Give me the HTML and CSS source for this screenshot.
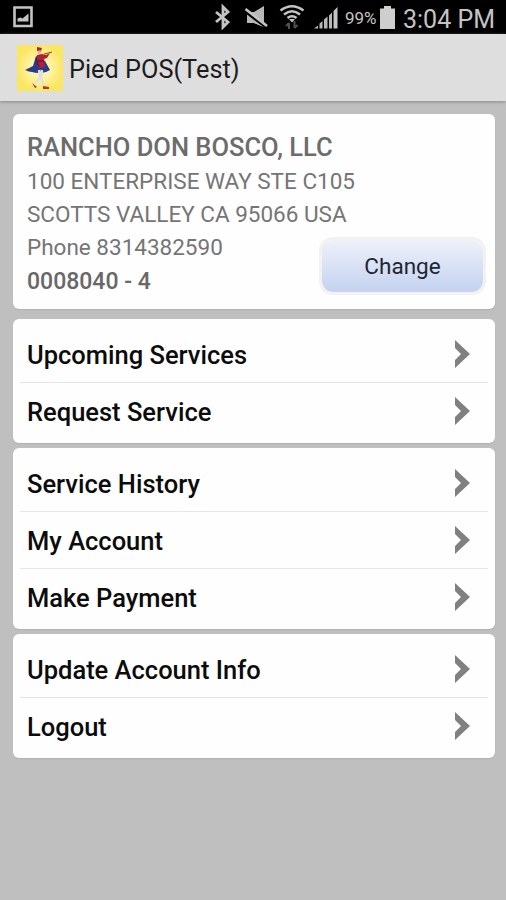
FILE: index.html
```html
<!DOCTYPE html>
<html lang="en">
<head>
  <meta charset="UTF-8">
  <meta name="viewport" content="width=device-width, initial-scale=1.0">
  <title>Pied POS(Test)</title>
  <link rel="stylesheet" href="styles.css">
</head>
<body>
  <div class="statusbar">
    <svg class="picture" width="20" height="22" viewBox="0 0 20 22">
      <path d="M1.5 1.5h17v18.5h-17z" fill="none" stroke="#c4c4c4" stroke-width="2.6"/>
      <path d="M4.5 15.5v-3l3-1 2 1 6-5v8z" fill="#c4c4c4"/>
    </svg>
    <svg class="icons" width="132" height="28" viewBox="0 0 132 28">
      <path d="M2 9l12 10-5 5V4l5 5L2 19" fill="none" stroke="#c4c4c4" stroke-width="2.8"/>
      <path d="M33 9h7l10-6v21l-10-4h-7z" fill="#b8b8b8"/>
      <path d="M31 8l22 17" stroke="#000" stroke-width="3"/>
      <path d="M31.5 6l21.5 17" stroke="#c4c4c4" stroke-width="2.6"/>
      <path d="M33 14v6h7l10 4z" fill="#b8b8b8"/>
      <g fill="none" stroke="#c4c4c4" stroke-width="2.6">
        <path d="M66.5 7.500q11.500-8.500 23 0"/>
        <path d="M70 11.500q8-6.500 16 0"/>
        <path d="M73.5 15q4.500-3.500 9 0"/>
      </g>
      <path d="M75 16h6l-3 3.500z" fill="#c4c4c4"/>
      <path d="M75 26v-6m-3 3l3-3M80.500 18v7m3-3l-3 3" fill="none" stroke="#505050" stroke-width="2"/>
      <path d="M100 25.500h4v-3zM105.500 25.500v-5l3-2.500v7.500zM110 25.500v-9l3.500-3v12zM115 25.500v-13l3-3v16z" fill="#b8b8b8"/>
      <path d="M119.500 25.500V8l4-4v21.500z" fill="#c4c4c4"/>
    </svg>
    <span class="percent">99%</span>
    <svg class="battery" width="16" height="23" viewBox="0 0 16 23">
      <path d="M0 2.500h4V0h7v2.500h4V23H0z" fill="#cecece"/>
    </svg>
    <span class="clock">3:04 PM</span>
  </div>

  <div class="titlebar">
    <svg class="logo" width="46" height="46" viewBox="0 0 46 46">
      <defs>
        <radialGradient id="glow">
          <stop offset="0" stop-color="#fff7d0"/>
          <stop offset="0.5" stop-color="#fff2a0"/>
          <stop offset="1" stop-color="#fbe662"/>
        </radialGradient>
      </defs>
      <rect width="46" height="46" fill="url(#glow)"/>
      <path d="M19 11l-3 10-8 4q4 2 7 2 6 2 14 0l4-2-5-9z" fill="#273b8c"/>
      <path d="M20 10l5-1 4 1 4-2-3 5-3 1 1 8-7 1-1-6z" fill="#b51f35"/>
      <path d="M20 2l5 1-1 3h-4z" fill="#a62a38"/>
      <circle cx="22.5" cy="7" r="1.8" fill="#e4b08c"/>
      <path d="M27 9l8-2" stroke="#705040"/>
      <path d="M22 25l1 8-6 6M25 25l-1 8 3 8" fill="none" stroke="#dfe2dc" stroke-width="2.5"/>
      <path d="M15 38l5 4-2 1zM26 41l6 1v2h-6z" fill="#ad3a2b"/>
      <path d="M19 13l3 9M21 16h6" stroke="#3a1735"/>
    </svg>
    <span class="title">Pied POS(Test)</span>
  </div>

  <div class="content">
    <div class="card account">
      <div class="address">
        <div class="name">RANCHO DON BOSCO, LLC</div>
        <div>100 ENTERPRISE WAY STE C105</div>
        <div>SCOTTS VALLEY CA 95066 USA</div>
        <div>Phone 8314382590</div>
        <div class="number">0008040 - 4</div>
      </div>
      <button class="change">Change</button>
    </div>

    <div class="card menu">
      <div class="row"><span>Upcoming Services</span><svg class="arrow" viewBox="0 0 15 28"><path d="M0 0l15 14L0 28v-8l6-6-6-6z"/></svg></div>
      <div class="row"><span>Request Service</span><svg class="arrow" viewBox="0 0 15 28"><path d="M0 0l15 14L0 28v-8l6-6-6-6z"/></svg></div>
    </div>

    <div class="card menu">
      <div class="row"><span>Service History</span><svg class="arrow" viewBox="0 0 15 28"><path d="M0 0l15 14L0 28v-8l6-6-6-6z"/></svg></div>
      <div class="row"><span>My Account</span><svg class="arrow" viewBox="0 0 15 28"><path d="M0 0l15 14L0 28v-8l6-6-6-6z"/></svg></div>
      <div class="row"><span>Make Payment</span><svg class="arrow" viewBox="0 0 15 28"><path d="M0 0l15 14L0 28v-8l6-6-6-6z"/></svg></div>
    </div>

    <div class="card menu">
      <div class="row"><span>Update Account Info</span><svg class="arrow" viewBox="0 0 15 28"><path d="M0 0l15 14L0 28v-8l6-6-6-6z"/></svg></div>
      <div class="row"><span>Logout</span><svg class="arrow" viewBox="0 0 15 28"><path d="M0 0l15 14L0 28v-8l6-6-6-6z"/></svg></div>
    </div>
  </div>
</body>
</html>
```
FILE: styles.css
```css
* { box-sizing: border-box; }
body { margin: 0; height: 900px; overflow: hidden; background: #bfbfbf; font-family: Roboto, sans-serif; }
svg { display: block; flex: none; }

.statusbar { display: flex; align-items: flex-start; height: 34px; background: #000; color: #c4c4c4; white-space: nowrap; }
.picture { margin: 6px 0 0 13px; }
.icons { margin: 3px 0 0 181px; }
.percent { width: 33px; margin-left: -1px; font-size: 17px; line-height: 36px; }
.battery { margin: 6px 0 0 2px; }
.clock { margin-left: 7px; font-size: 25px; line-height: 39px; }

.titlebar { display: flex; align-items: center; height: 67px; padding-left: 17px; background: #dedede; box-shadow: 0 1px 3px #888; }
.title { margin-left: 6px; padding-top: 3px; font-size: 25.3px; color: #1c1c1c; }

.content { padding: 13px 11px 0 13px; }
.card { background: #fefefe; border-radius: 6px; box-shadow: 0 1px 1px #b0b2b1; }
.account { display: flex; height: 195px; padding: 17px 9px 0 14px; margin-bottom: 9.5px; }
.address { flex: 1; width: 0; white-space: nowrap; font-size: 22.5px; line-height: 33px; color: #757575; }
.name { height: 34px; font-size: 25.5px; font-weight: 500; color: #6c6c6c; }
.number { padding-top: 1px; font-size: 23px; font-weight: 500; color: #686868; }
.change { align-self: flex-end; flex: none; width: 167px; height: 58px; margin: 0 0 14px; padding: 0 0 1px; border: 3px solid #f2f2f2; border-radius: 14px; background: linear-gradient(#eff1fa, #c3d2f0) padding-box; font-family: inherit; font-size: 22.5px; color: #202633; }

.menu { padding: 6.5px 7px 3.5px; margin-bottom: 5px; }
.row { display: flex; align-items: center; justify-content: space-between; height: 57px; padding: 0 18px 0 7px; font-size: 25.5px; font-weight: 500; color: #0c0c0c; }
.row span { padding-top: 2px; }
.row + .row { border-top: 1px solid #e6e6e6; }
.arrow { width: 15px; height: 28px; fill: #808080; }
```
